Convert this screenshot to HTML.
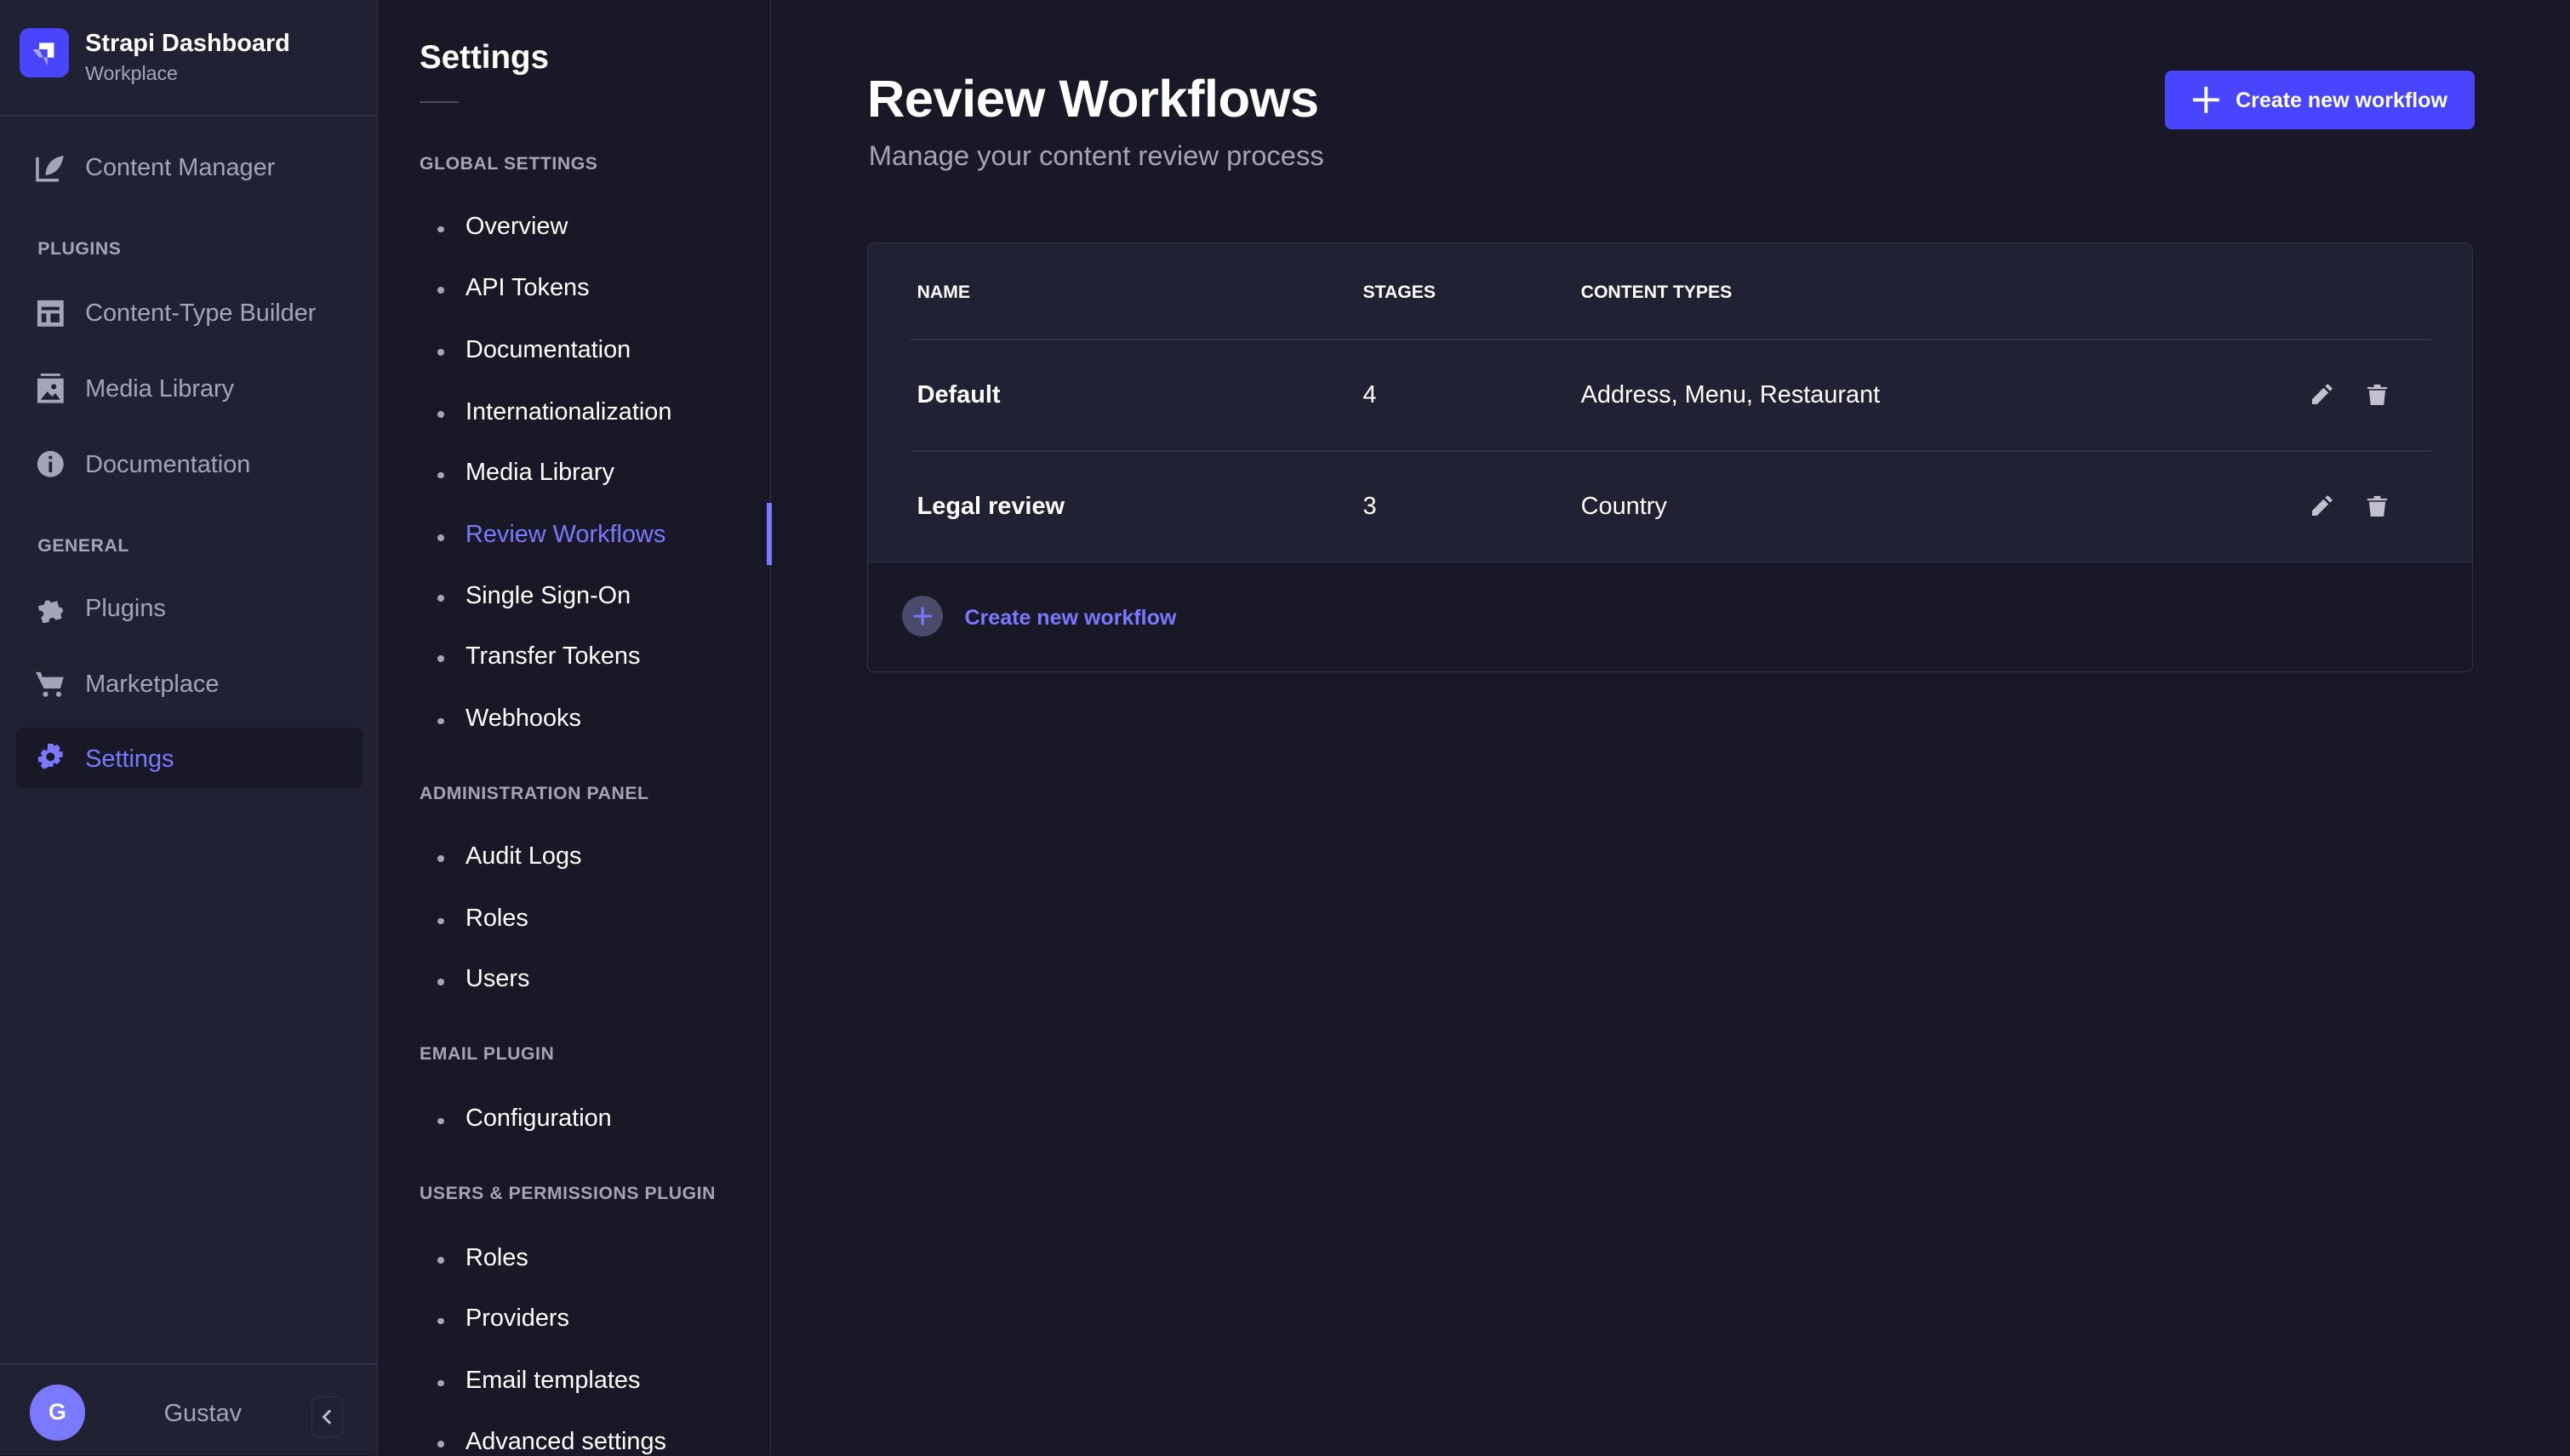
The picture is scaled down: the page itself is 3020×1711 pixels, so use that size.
<!DOCTYPE html>
<html><head><meta charset="utf-8"><style>
html,body{margin:0;padding:0;background:#181826;}
body{width:1568px;height:888px;zoom:1.92602;overflow:hidden;position:relative;font-family:"Liberation Sans",sans-serif;}
.abs{position:absolute;}
#nav{left:0;top:0;width:230px;height:888px;background:#212134;border-right:1px solid #32324d;}
#sub{left:231px;top:0;width:239px;height:888px;background:#181826;border-right:1px solid #32324d;}
.ni{position:absolute;left:22px;font-size:15px;color:#a5a5ba;}
.ni svg{position:absolute;left:0;top:-1px}
.ni span{position:absolute;left:30px;white-space:nowrap;}
.sec{position:absolute;font-size:11px;font-weight:bold;color:#a5a5ba;letter-spacing:.3px;}
.li{position:absolute;left:284px;font-size:15px;color:#fff;white-space:nowrap;}
.li:before{content:"";position:absolute;left:-17px;top:8px;width:4px;height:4px;border-radius:2px;background:#a5a5ba;}
.th{position:absolute;font-size:11px;font-weight:bold;color:#fff;}
.td{position:absolute;font-size:15px;color:#fff;}
</style></head><body>
<div id="nav" class="abs">
  <div class="abs" style="left:12px;top:17px;width:30px;height:30px;border-radius:6px;background:#4945ff;">
    <svg width="30" height="30" viewBox="0 0 30 30"><path d="M12 9h9v9h-4v-5h-5z" fill="#fff"/><path d="M12 13v5h5v5z" fill="#a9a7ff"/><path d="M8 13h4v5z" fill="#a9a7ff"/></svg>
  </div>
  <div class="abs" style="left:52px;top:18px;font-size:15px;font-weight:bold;color:#fff;">Strapi Dashboard</div>
  <div class="abs" style="left:52px;top:38px;font-size:12px;color:#a5a5ba;">Workplace</div>
  <div class="abs" style="left:0;top:70px;width:230px;height:1px;background:#32324d;"></div>
  <div class="ni" style="top:94px"><svg width="18" height="18" viewBox="0 0 18 18"><path d="M1 3v14h13" stroke="#a5a5ba" stroke-width="1.8" fill="none"/><path d="M6 14c0-6 4-11 11-12-1 6-4 11-11 12z" fill="#a5a5ba"/></svg><span>Content Manager</span></div>
  <div class="sec" style="left:23px;top:146px">PLUGINS</div>
  <div class="ni" style="top:183px"><svg width="18" height="18" viewBox="0 0 18 18"><path d="M1 1h16v16H1z" fill="#a5a5ba"/><path d="M3.5 5h11v2h-11zM3.5 9h3v5.5h-3zM9 9h5.5v5.5H9z" fill="#212134"/></svg><span>Content-Type Builder</span></div>
  <div class="ni" style="top:229px"><svg width="18" height="18" viewBox="0 0 18 18"><path d="M3 0h12v1.5H3z" fill="#a5a5ba"/><path d="M1 3h16v15H1z" fill="#a5a5ba"/><path d="M3 16l4-5 3 3 2-2 3 4z" fill="#212134"/><circle cx="11" cy="8" r="1.6" fill="#212134"/></svg><span>Media Library</span></div>
  <div class="ni" style="top:275px"><svg width="18" height="18" viewBox="0 0 18 18"><circle cx="9" cy="9" r="8" fill="#a5a5ba"/><path d="M8 7.5h2V14H8zM8 4h2v2H8z" fill="#212134"/></svg><span>Documentation</span></div>
  <div class="sec" style="left:23px;top:327px">GENERAL</div>
  <div class="ni" style="top:363px"><svg width="18" height="18" viewBox="0 0 18 18"><path d="M2 6h4a2 2 0 1 1 4 0h4v4a2 2 0 1 1 0 4v3h-4a2 2 0 1 0-4 0H2v-4a2 2 0 1 0 0-4z" fill="#a5a5ba" transform="rotate(-15 9 9)"/></svg><span>Plugins</span></div>
  <div class="ni" style="top:409px"><svg width="18" height="18" viewBox="0 0 18 18"><path d="M0 2h3l1 3h13l-2 7H5z" fill="#a5a5ba"/><circle cx="6" cy="15.5" r="1.6" fill="#a5a5ba"/><circle cx="14" cy="15.5" r="1.6" fill="#a5a5ba"/></svg><span>Marketplace</span></div>
  <div class="abs" style="left:10px;top:444px;width:211px;height:37px;border-radius:4px;background:#181826;"></div>
  <div class="ni" style="top:455px;color:#7b79ff"><svg width="18" height="18" viewBox="0 0 18 18"><path d="M7.5 0h3l.5 2.5 2-1 2 2-1 2 2.5.5v3l-2.5.5 1 2-2 2-2-1-.5 2.5h-3L7 15.5l-2 1-2-2 1-2L1.5 12V9L4 8.5l-1-2 2-2 2 1z" fill="#7b79ff" transform="translate(0 -1)"/><circle cx="9" cy="8" r="2.6" fill="#181826"/></svg><span>Settings</span></div>
  <div class="abs" style="left:0;top:832px;width:230px;height:1px;background:#32324d;"></div>
  <div class="abs" style="left:18px;top:845px;width:34px;height:34px;border-radius:17px;background:#7b79ff;color:#fff;font-weight:bold;font-size:14px;text-align:center;line-height:34px;">G</div>
  <div class="abs" style="left:100px;top:854px;font-size:15px;color:#a5a5ba;">Gustav</div>
  <div class="abs" style="left:190px;top:852px;width:18px;height:24px;border:1px solid #32324d;border-radius:4px;"><svg width="18" height="24" viewBox="0 0 18 24"><path d="M11 8l-4 4 4 4" stroke="#c0c0cf" stroke-width="1.5" fill="none"/></svg></div>
</div>
<div id="sub" class="abs"></div>
<div class="abs" style="left:256px;top:24px;font-size:20px;font-weight:bold;color:#fff;">Settings</div>
<div class="abs" style="left:256px;top:62px;width:24px;height:1px;background:#4a4a6a;"></div>
<div class="sec" style="left:256px;top:94px">GLOBAL SETTINGS</div>
<div class="li" style="top:130px">Overview</div>
<div class="li" style="top:167px">API Tokens</div>
<div class="li" style="top:205px">Documentation</div>
<div class="li" style="top:243px">Internationalization</div>
<div class="li" style="top:280px">Media Library</div>
<div class="li" style="top:318px;color:#7b79ff">Review Workflows</div>
<div class="abs" style="left:468px;top:307px;width:3px;height:38px;background:#7b79ff;"></div>
<div class="li" style="top:355px">Single Sign-On</div>
<div class="li" style="top:392px">Transfer Tokens</div>
<div class="li" style="top:430px">Webhooks</div>
<div class="sec" style="left:256px;top:478px">ADMINISTRATION PANEL</div>
<div class="li" style="top:514px">Audit Logs</div>
<div class="li" style="top:552px">Roles</div>
<div class="li" style="top:589px">Users</div>
<div class="sec" style="left:256px;top:637px">EMAIL PLUGIN</div>
<div class="li" style="top:674px">Configuration</div>
<div class="sec" style="left:256px;top:722px">USERS &amp; PERMISSIONS PLUGIN</div>
<div class="li" style="top:759px">Roles</div>
<div class="li" style="top:796px">Providers</div>
<div class="li" style="top:834px">Email templates</div>
<div class="li" style="top:871px">Advanced settings</div>

<div class="abs" style="left:529px;top:42px;font-size:32px;font-weight:bold;color:#fff;letter-spacing:-.3px;">Review Workflows</div>
<div class="abs" style="left:530px;top:85px;font-size:17px;color:#a5a5ba;">Manage your content review process</div>
<div class="abs" style="left:1321px;top:43px;width:189px;height:36px;border-radius:4px;background:#4945ff;">
  <svg class="abs" style="left:16px;top:9px" width="18" height="18" viewBox="0 0 18 18"><path d="M9 1v16M1 9h16" stroke="#fff" stroke-width="2"/></svg>
  <div class="abs" style="left:43px;top:11px;font-size:13px;font-weight:bold;color:#fff;white-space:nowrap;">Create new workflow</div>
</div>
<div class="abs" style="left:529px;top:148px;width:979px;height:261px;border:1px solid #32324d;border-radius:4px;background:#181826;overflow:hidden;">
  <div class="abs" style="left:0;top:0;width:979px;height:194px;background:#212134;border-bottom:1px solid #32324d;"></div>
  <div class="th" style="left:30px;top:24px">NAME</div>
  <div class="th" style="left:302px;top:24px">STAGES</div>
  <div class="th" style="left:435px;top:24px">CONTENT TYPES</div>
  <div class="abs" style="left:26px;top:58px;width:928px;height:1px;background:#32324d;"></div>
  <div class="td" style="left:30px;top:84px;font-weight:bold">Default</div>
  <div class="td" style="left:302px;top:84px">4</div>
  <div class="td" style="left:435px;top:84px">Address, Menu, Restaurant</div>
  <div class="abs" style="left:26px;top:126px;width:928px;height:1px;background:#32324d;"></div>
  <div class="td" style="left:30px;top:152px;font-weight:bold">Legal review</div>
  <div class="td" style="left:302px;top:152px">3</div>
  <div class="td" style="left:435px;top:152px">Country</div>
  <svg class="abs" style="left:880px;top:85px" width="14" height="14" viewBox="0 0 14 14"><path d="M1 13v-3l7-7 3 3-7 7zM9 2l1.5-1.5 3 3L12 5z" fill="#c0c0cf"/></svg>
  <svg class="abs" style="left:914px;top:85px" width="14" height="14" viewBox="0 0 14 14"><path d="M1 2.5h12v1.2H1zM5 1h4v1.5H5zM2 4.5h10l-1 9H3z" fill="#c0c0cf"/></svg>
  <svg class="abs" style="left:880px;top:153px" width="14" height="14" viewBox="0 0 14 14"><path d="M1 13v-3l7-7 3 3-7 7zM9 2l1.5-1.5 3 3L12 5z" fill="#c0c0cf"/></svg>
  <svg class="abs" style="left:914px;top:153px" width="14" height="14" viewBox="0 0 14 14"><path d="M1 2.5h12v1.2H1zM5 1h4v1.5H5zM2 4.5h10l-1 9H3z" fill="#c0c0cf"/></svg>
  <div class="abs" style="left:21px;top:215px;width:25px;height:25px;border-radius:13px;background:#4a4a6a;"><svg width="25" height="25" viewBox="0 0 25 25"><path d="M12.5 7v11M7 12.5h11" stroke="#7b79ff" stroke-width="1.5"/></svg></div>
  <div class="abs" style="left:59px;top:221px;font-size:13px;font-weight:bold;color:#7b79ff;">Create new workflow</div>
</div>
</body></html>
